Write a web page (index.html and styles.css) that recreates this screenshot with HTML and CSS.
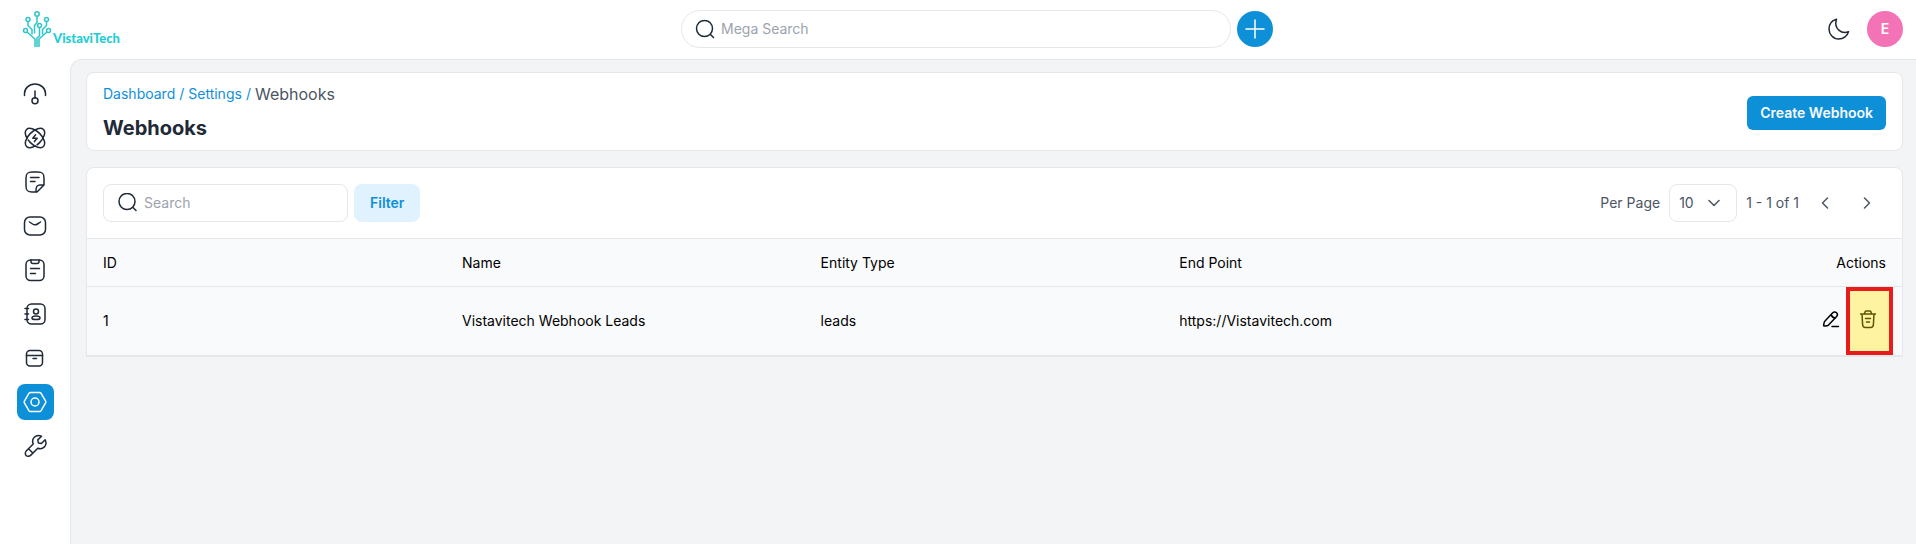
FILE: index.html
```html
<!DOCTYPE html>
<html lang="en">
<head>
<meta charset="utf-8">
<title>Webhooks</title>
<link rel="stylesheet" href="styles.css">
</head>
<body>
<header class="topbar">
  <a class="logo" href="#" aria-label="VistaviTech">
    <svg class="logo-mark" width="30" height="38" viewBox="0 0 30 38">
      <circle cx="15" cy="4" r="2.2"/><circle cx="6" cy="9.500" r="2"/><circle cx="24.500" cy="9.500" r="2"/>
      <circle cx="3.500" cy="20.500" r="2"/><circle cx="26.500" cy="20.500" r="2"/><circle cx="17.500" cy="15.500" r="2"/>
      <path d="M15 6.500v6l-2.500 3v8M6 11.500v4l4 4v5M24.500 11.500v4l-4 4v5M5 22l8 7v8M25 22l-8 7v8M17.500 18v8l-2.500 2v9"/>
    </svg>
    <span class="logo-text">VistaviTech</span>
  </a>
  <div class="mega">
    <label class="field field-round">
      <svg class="icon" width="20" height="20" viewBox="0 0 20 20"><circle cx="9.500" cy="9.500" r="8"/><path d="M15.500 15.500l3 3"/></svg>
      <input type="text" placeholder="Mega Search" aria-label="Mega Search">
    </label>
    <button class="add" type="button" aria-label="Add"><svg class="icon" width="20" height="20" viewBox="0 0 20 20"><path d="M10 1v18M1 10h18"/></svg></button>
  </div>
  <div class="user">
    <button class="ghost" type="button" aria-label="Dark mode"><svg class="icon" width="24" height="24" viewBox="0 0 24 24"><path d="M9.500 2.200C5 3.500 2 7.200 2 12c0 5.500 4.300 10 9.700 10 4.500 0 8.500-2.800 9.800-7.200-6.800 2.600-15-2.800-12-12.600z"/></svg></button>
    <button class="avatar" type="button">E</button>
  </div>
</header>
<div class="shell">
  <nav class="sidebar">
    <a href="#" aria-label="Dashboard"><svg class="icon" width="24" height="24" viewBox="0 0 24 24"><path d="M1.500 13.500v-2C1.500 6.500 6 2 12 2s10.500 4.500 10.500 9.500v2M12 9v7"/><circle cx="12" cy="18.800" r="3"/></svg></a>
    <a href="#" aria-label="Leads"><svg class="icon" width="24" height="24" viewBox="0 0 24 24"><ellipse cx="12" cy="12" rx="12" ry="6.500" transform="rotate(45 12 12)" stroke-dasharray="18 2 40"/><ellipse cx="12" cy="12" rx="12" ry="6.500" transform="rotate(-45 12 12)" stroke-dasharray="18 2 40"/><path d="M12.600 8.800l-2.800 3.400h4.400l-2.800 3.400"/></svg></a>
    <a href="#" aria-label="Quotes"><svg class="icon" width="24" height="24" viewBox="0 0 24 24"><path d="M13 22H9c-4.500 0-6-1.500-6-6V8c0-4.500 1.500-6 6-6h6c4.500 0 6 1.500 6 6v7l-7 7h-1v-1.500c0-4 .8-5.500 4-5.500h4M7.500 7.500h8.500M7.500 11.500h4.500"/></svg></a>
    <a href="#" aria-label="Mail"><svg class="icon" width="24" height="24" viewBox="0 0 24 24"><rect x="1.500" y="3" width="21" height="18" rx="5.500"/><path d="M6.500 8l3 2c1.700 1.100 3.300 1.100 5 0l3-2"/></svg></a>
    <a href="#" aria-label="Activities"><svg class="icon" width="24" height="24" viewBox="0 0 24 24"><rect x="3" y="2" width="18" height="20.500" rx="4.500"/><path d="M8 2v1.500C8 5 8.500 5.500 10 5.500h4c1.500 0 2-.5 2-2V2M7.500 10.500h9M7.500 15.500h5"/></svg></a>
    <a href="#" aria-label="Contacts"><svg class="icon" width="24" height="24" viewBox="0 0 24 24"><rect x="4" y="2" width="18" height="20" rx="4.500"/><path d="M2 6.500h3.500M2 12h3.500M2 17.500h3.500"/><circle cx="13" cy="9.500" r="2.500"/><path d="M9 16c0-1.500 1.500-2 4-2s4 .5 4 2-1 1.500-4 1.500-4 0-4-1.500z"/></svg></a>
    <a href="#" aria-label="Products"><svg class="icon" width="24" height="24" viewBox="0 0 24 24"><rect x="3.500" y="4.500" width="16" height="15.500" rx="3.500"/><path d="M3.500 9.500h16M10 12.500h3.500"/></svg></a>
    <a class="active" href="#" aria-label="Settings"><svg class="icon" width="24" height="24" viewBox="0 0 24 24"><path d="M7.500 2.500h9c.7 0 1.200.3 1.600.9l4.500 7.700c.3.500.3 1.200 0 1.700l-4.500 7.800c-.4.600-.9.900-1.600.9h-9c-.7 0-1.200-.3-1.600-.9L1.400 12.800c-.3-.5-.3-1.200 0-1.700L5.900 3.400c.4-.6.900-.9 1.600-.9z"/><circle cx="12" cy="12" r="4"/></svg></a>
    <a href="#" aria-label="Configuration"><svg class="icon" width="24" height="24" viewBox="0 0 24 24"><path d="M18.500 2.200l-3.700 3.700.6 3 3 .6 3.700-3.700c1.500 3 .8 5.600-.7 7.100-1.700 1.700-4.200 2.200-6.600 1.300l-7.200 7.200c-1 1-3.300 1.300-4.500.1s-.9-3.500.1-4.500l7-7C9.200 7.500 9.600 5 11.300 3.300s4.600-2.200 7.200-1.100zM5.500 14.800l4 4"/></svg></a>
  </nav>
  <main class="content">
    <section class="card page-head">
      <div>
        <nav class="crumbs"><a href="#">Dashboard</a><span class="sep">/</span><a href="#">Settings</a><span class="sep">/</span><span class="here">Webhooks</span></nav>
        <h1>Webhooks</h1>
      </div>
      <button class="primary" type="button">Create Webhook</button>
    </section>
    <section class="card grid">
      <div class="toolbar">
        <div class="tools">
          <label class="field">
            <svg class="icon" width="20" height="20" viewBox="0 0 20 20"><circle cx="9" cy="8.500" r="8"/><path d="M15 14.500l3 3"/></svg>
            <input type="text" placeholder="Search" aria-label="Search">
          </label>
          <button class="filter" type="button">Filter</button>
        </div>
        <div class="pager">
          <label for="per-page">Per Page</label>
          <div class="select">
            <select id="per-page"><option>10</option><option>20</option></select>
            <svg class="icon" width="12" height="8" viewBox="0 0 12 8"><path d="M1 1.500l5 5 5-5"/></svg>
          </div>
          <span class="range">1 - 1 of 1</span>
          <button class="page" type="button" aria-label="Previous"><svg class="icon" width="8" height="12" viewBox="0 0 8 12"><path d="M6.500 1l-5 5 5 5"/></svg></button>
          <button class="page" type="button" aria-label="Next"><svg class="icon" width="8" height="12" viewBox="0 0 8 12"><path d="M1.500 1l5 5-5 5"/></svg></button>
        </div>
      </div>
      <table>
        <thead><tr><th class="first">ID</th><th>Name</th><th>Entity Type</th><th>End Point</th><th class="last">Actions</th></tr></thead>
        <tbody><tr>
          <td>1</td><td>Vistavitech Webhook Leads</td><td>leads</td><td>https://Vistavitech.com</td>
          <td><div class="actions">
            <button class="edit" type="button" aria-label="Edit"><svg class="icon" width="18" height="18" viewBox="0 0 18 18"><path d="M10.500 3L3 11c-.5.500-.8 1-.9 1.700L1.700 15c-.1.800.3 1.200 1.100 1.100l2.500-.4c.6-.1 1.100-.4 1.500-.9l7.800-8.300c1.200-1.300 1.200-2.500 0-3.700s-2.800-1.100-4.100.2zM9.200 4.500c.5 2 2 3.400 4.100 3.700M10 16.500h6.500"/></svg></button>
            <button class="delete" type="button" aria-label="Delete"><svg class="icon" width="18" height="20" viewBox="0 0 18 20"><path d="M1.500 5h15M5.500 4.500l.6-1.700c.2-.6.500-.8 1.200-.8h3.400c.7 0 1 .2 1.200.8l.6 1.700M3 5l.6 10.500c.1 2 .8 3 2.800 3h5.200c2 0 2.700-1 2.800-3L15 5M6.500 9.500h5M7.500 13h3"/></svg></button>
          </div></td>
        </tr></tbody>
      </table>
    </section>
  </main>
</div>
</body>
</html>
```
FILE: styles.css
```css
* { box-sizing: border-box; }
body { margin: 0; min-height: 100vh; display: flex; flex-direction: column; background: #fff; color: #1f2937; font: 14px/20px Inter, "Liberation Sans", sans-serif; }
button, input, select { font: inherit; color: inherit; border: 0; background: none; margin: 0; padding: 0; }
button { cursor: pointer; display: flex; align-items: center; justify-content: center; }
a { color: inherit; text-decoration: none; }
.icon { display: block; flex: none; fill: none; stroke: currentColor; stroke-width: 1.5; stroke-linecap: round; stroke-linejoin: round; }

.topbar { display: flex; align-items: center; justify-content: space-between; height: 59px; padding: 0 13px 2px 16px; }
.logo { display: flex; align-items: flex-end; gap: 1px; width: 117px; padding-left: 6px; }
.logo-mark { flex: none; fill: none; stroke: #2cc5cb; stroke-width: 1.5; }
.logo-text { font: 900 13px/20px Lato, sans-serif; color: #1fcdd3; }
.mega { display: flex; align-items: center; gap: 6px; }
.field { display: flex; align-items: center; gap: 6px; width: 245px; height: 38px; padding: 0 14px; border: 1px solid #e5e7eb; border-radius: 8px; background: #fff; }
.field input { flex: 1; min-width: 0; outline: 0; }
.field input::placeholder { color: #9ca3af; opacity: 1; }
.field-round { width: 550px; padding: 0 13px; border-radius: 19px; }
.add { width: 36px; height: 36px; border-radius: 50%; background: #0e90d9; color: #fff; }
.user { display: flex; align-items: center; gap: 10px; }
.ghost { width: 36px; height: 36px; }
.avatar { width: 36px; height: 36px; border-radius: 50%; background: #f472b6; color: #fff; font-weight: 600; }

.shell { flex: 1; display: flex; }
.sidebar { display: flex; flex-direction: column; gap: 8px; width: 70px; padding: 17px 16px 16px 17px; }
.sidebar a { display: flex; align-items: center; justify-content: center; height: 36px; padding-right: 2px; border-radius: 8px; }
.sidebar .active { background: #0e90d9; color: #fff; }
.content { flex: 1; display: flex; flex-direction: column; gap: 16px; padding: 12px 13px 16px 15px; border: solid #e5e7eb; border-width: 1px 0 0 1px; border-top-left-radius: 12px; background: #f3f4f6; }
.card { background: #fff; border: 1px solid #e5e7eb; border-radius: 8px; }

.page-head { display: flex; align-items: center; justify-content: space-between; padding: 8px 16px 6px; }
.crumbs { display: flex; align-items: center; gap: 4px; line-height: 26px; color: #0e90d9; }
.crumbs .here { font-size: 16px; color: #4b5563; }
h1 { margin: 5px 0 0; font-size: 20px; line-height: 32px; font-weight: 700; }
.primary { height: 34px; padding: 0 13px; border-radius: 6px; background: #0e90d9; color: #f9fafb; font-weight: 600; }

.toolbar { display: flex; align-items: center; justify-content: space-between; padding: 16px; }
.tools { display: flex; gap: 6px; }
.filter { padding: 0 16px; border-radius: 8px; background: #e0f2fe; color: #0e90d9; font-weight: 600; }
.pager { display: flex; align-items: center; gap: 9px; padding-right: 3px; color: #4b5563; }
.select { display: flex; align-items: center; width: 68px; height: 38px; border: 1px solid #e5e7eb; border-radius: 8px; }
.select select { appearance: none; width: 66px; height: 36px; padding-left: 9px; margin-right: -28px; outline: 0; }
.select .icon { pointer-events: none; }
.page { width: 33px; height: 36px; }

table { width: 100%; table-layout: fixed; border-collapse: collapse; color: #000; }
th { height: 48px; padding: 0; text-align: left; font-weight: 400; width: 19.76%; }
.first { width: 20.66%; }
th.last { width: auto; text-align: right; }
tr { background: #f9fafb; border-top: 1px solid #e5e7eb; border-bottom: 1px solid #e5e7eb; }
td { height: 69px; padding: 0; }
th:first-child, td:first-child { padding-left: 16px; }
th:last-child { padding-right: 16px; }
td:last-child { padding-right: 9px; }
.grid { border-bottom-left-radius: 0; border-bottom-right-radius: 0; }
.actions { display: flex; align-items: center; justify-content: flex-end; gap: 6px; }
.edit { width: 18px; height: 36px; padding-bottom: 4px; }
.delete { width: 47px; height: 68px; padding: 0 3px 4px 0; border: 4px solid #e81c1c; background: #fdf3a0; color: #5f5405; }
```
